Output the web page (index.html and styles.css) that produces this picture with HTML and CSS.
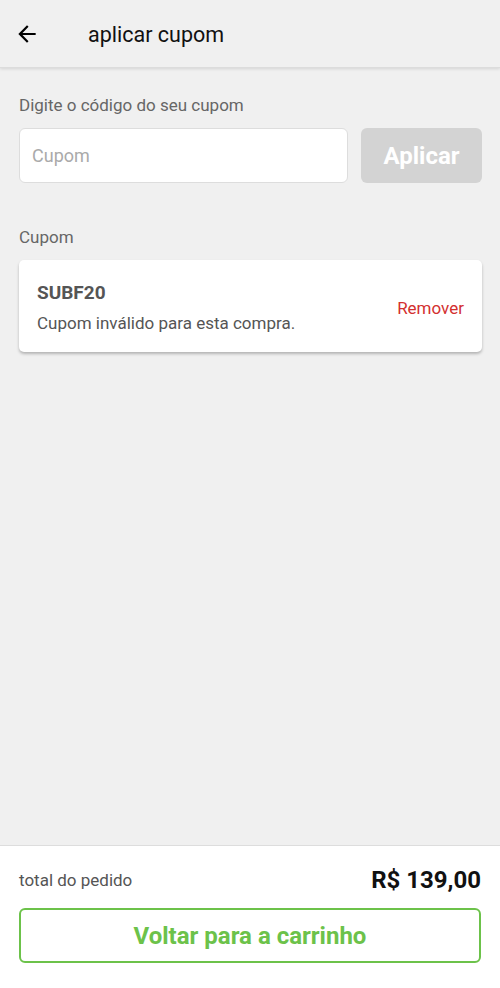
FILE: index.html
```html
<!DOCTYPE html>
<html lang="pt-BR">
<head>
  <meta charset="UTF-8">
  <meta name="viewport" content="width=device-width, initial-scale=1.0">
  <title>aplicar cupom</title>
  <link rel="stylesheet" href="styles.css">
</head>
<body>
  <div class="app">
    <header class="topbar">
      <button class="back" aria-label="Voltar">
        <svg width="26" height="26" viewBox="0 0 24 24"><path d="M20 11H7.83l5.59-5.59L12 4l-8 8 8 8 1.41-1.41L7.83 13H20v-2z" fill="#000"/></svg>
      </button>
      <h1>aplicar cupom</h1>
    </header>

    <main class="content">
      <label class="label" for="coupon">Digite o código do seu cupom</label>
      <div class="coupon-form">
        <input id="coupon" class="coupon-input" type="text" placeholder="Cupom">
        <button class="apply" disabled>Aplicar</button>
      </div>

      <p class="label section-label">Cupom</p>
      <div class="card">
        <div class="card-info">
          <div class="code">SUBF20</div>
          <div class="status">Cupom inválido para esta compra.</div>
        </div>
        <a href="#" class="remove">Remover</a>
      </div>
    </main>

    <footer class="bottom">
      <div class="total-row">
        <span class="total-label">total do pedido</span>
        <span class="total-value">R$ 139,00</span>
      </div>
      <button class="back-cart">Voltar para a carrinho</button>
    </footer>
  </div>
</body>
</html>
```

FILE: styles.css
```css
* { box-sizing: border-box; }
body { margin: 0; font-family: Roboto, 'Noto Sans', Arial, sans-serif; background: #f0f0f0; color: #555; }
.app { display: flex; flex-direction: column; height: 988px; }

.topbar { height: 68px; display: flex; align-items: center; background: #f0f0f0; border-bottom: 1px solid #dcdcdc; box-shadow: 0 1px 3px rgba(0,0,0,0.12); }
.back { border: none; background: none; padding: 0; margin: 1px 0 0 14px; width: 26px; height: 26px; display: flex; align-items: center; justify-content: center; }
.topbar h1 { margin: 2px 0 0 48px; font-size: 21.5px; font-weight: 400; color: #111; }

.content { flex: 1; padding: 25px 18px 0 19px; }
.label { display: block; font-size: 17px; color: #666; margin: 0; line-height: 24px; }
.coupon-form { display: flex; gap: 13px; margin-top: 11px; }
.coupon-input { flex: 1; height: 55px; border: 1px solid #ddd; border-radius: 6px; background: #fff; padding: 0 12px; font-family: inherit; font-size: 18px; color: #333; }
.coupon-input::placeholder { color: #aaa; }
.apply { width: 121px; height: 55px; border: none; border-radius: 6px; background: #d3d3d3; color: #fff; font-family: inherit; font-size: 24px; font-weight: 700; }

.section-label { margin-top: 42px; }
.card { margin-top: 11px; background: #fff; border-radius: 5px; box-shadow: 0 2px 3px rgba(0,0,0,0.25); display: flex; align-items: center; justify-content: space-between; padding: 21px 18px 18px 18px; }
.code { font-size: 19px; font-weight: 700; color: #555; line-height: 24px; }
.status { font-size: 17px; color: #555; margin-top: 7px; line-height: 22px; }
.remove { color: #d32f2f; font-size: 17px; text-decoration: none; }

.bottom { background: #fff; border-top: 1px solid #ddd; padding: 20px 19px 25px 19px; }
.total-row { display: flex; justify-content: space-between; align-items: center; }
.total-label { font-size: 17px; color: #555; }
.total-value { font-size: 24px; font-weight: 700; color: #111; }
.back-cart { display: block; width: 100%; height: 55px; margin-top: 14px; border: 2px solid #6cc24a; border-radius: 6px; background: #fff; color: #6cc24a; font-family: inherit; font-size: 24px; font-weight: 700; }
```
